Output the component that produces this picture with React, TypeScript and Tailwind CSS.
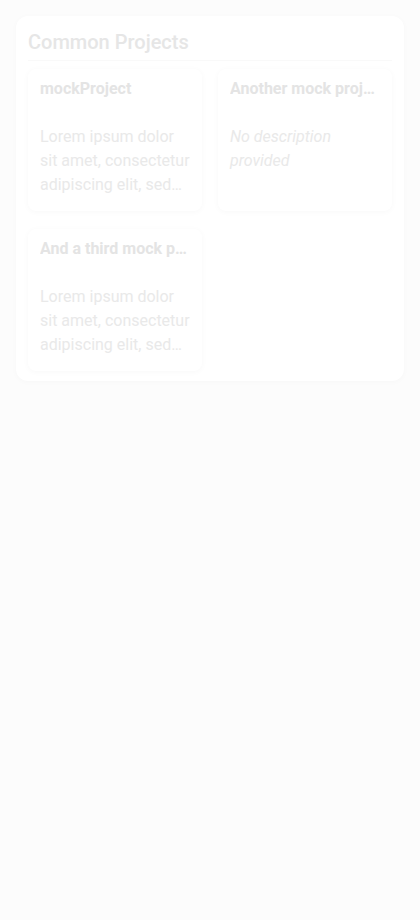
import React from "react";

const projects = [
  { title: "mockProject", desc: "Lorem ipsum dolor sit amet, consectetur adipiscing elit, sed do eiusmod tempor incididunt ut labore" },
  { title: "Another mock project", desc: null },
  { title: "And a third mock project", desc: "Lorem ipsum dolor sit amet, consectetur adipiscing elit, sed do eiusmod tempor incididunt ut labore" },
];

export default function App() {
  return (
    <div className="min-h-[920px] w-full bg-[#fcfcfc] p-4" style={{ fontFamily: "Roboto, 'Noto Sans', sans-serif" }}>
      <div className="rounded-xl bg-white px-3 pt-3 pb-[10px] shadow-[0_1px_6px_rgba(0,0,0,0.025)]">
        <h2 className="border-b border-[#f9f9f9] pb-1 text-xl leading-7 font-medium text-[#e6e6e6]">Common Projects</h2>
        <div className="mt-2 grid grid-cols-2 gap-x-4 gap-y-[18px]">
          {projects.map((p) => (
            <div key={p.title} className="h-[142px] rounded-lg bg-white px-3 pt-3 shadow-[0_1px_6px_rgba(0,0,0,0.03)]">
              <div className="truncate text-base leading-5 -mt-0.5 font-bold text-[#e4e4e4]">{p.title}</div>
              {p.desc ? (
                <p className="mt-[26px] line-clamp-3 text-base leading-6 text-[#e9e9e9]">{p.desc}</p>
              ) : (
                <p className="mt-[26px] text-base leading-6 italic text-[#e9e9e9]">No description provided</p>
              )}
            </div>
          ))}
        </div>
      </div>
    </div>
  );
}
